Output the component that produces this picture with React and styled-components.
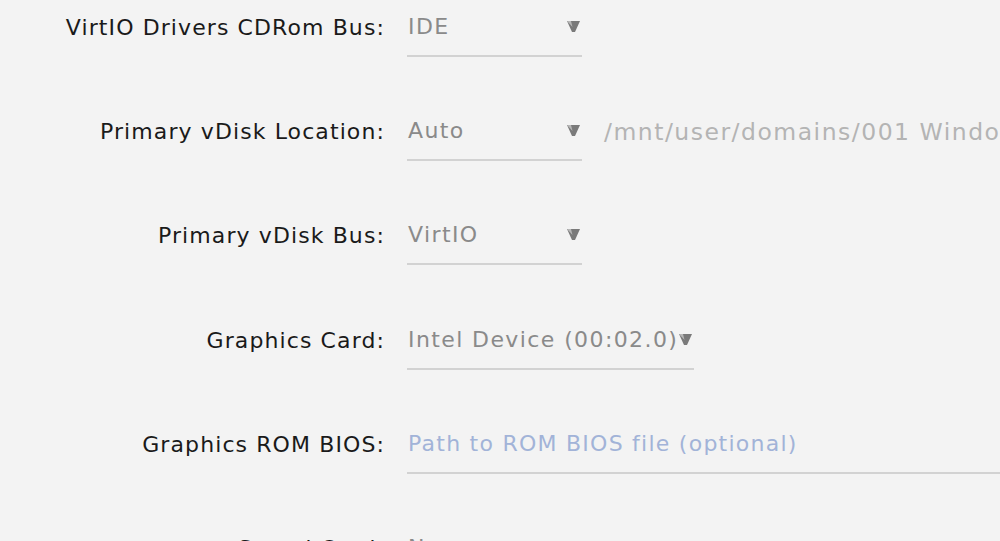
import React from "react";
import styled, { createGlobalStyle } from "styled-components";

const GlobalStyle = createGlobalStyle`
  html, body {
    margin: 0;
    padding: 0;
    background: #f3f3f3;
    overflow: hidden;
  }
  body {
    font-family: "DejaVu Sans", "Liberation Sans", sans-serif;
  }
`;

const Page = styled.div`
  width: 1000px;
  height: 541px;
  overflow: hidden;
  background: #f3f3f3;
`;

const Row = styled.div`
  display: flex;
  align-items: flex-start;
  gap: 22px;
  height: 104.2px;
  padding-top: 13px;
  box-sizing: border-box;
  white-space: nowrap;
`;

const Label = styled.div`
  width: 385px;
  flex: none;
  text-align: right;
  font-size: 22px;
  line-height: 30px;
  letter-spacing: 1.1px;
  color: #1a1a1a;
`;

const Field = styled.div`
  display: flex;
  align-items: center;
  justify-content: space-between;
  width: ${(p) => (p.wide ? "auto" : p.w || "175px")};
  flex: ${(p) => (p.wide ? "1 0 auto" : "none")};
  height: 44px;
  box-sizing: border-box;
  padding-bottom: 14px;
  border-bottom: 2px solid #d2d2d2;
  font-size: 22px;
  line-height: 30px;
  letter-spacing: ${(p) => (p.placeholder ? "1.25px" : "1.4px")};
  color: ${(p) => (p.placeholder ? "#a2b3d8" : "#8a8a8a")};
  margin-right: ${(p) => (p.wide ? "-200px" : "0")};
`;

const Value = styled.span`
  padding-left: 1px;
`;

const Hint = styled.div`
  font-size: 23.5px;
  line-height: 30px;
  letter-spacing: 1.5px;
  color: #b4b4b4;
`;

const Arrow = () => (
  <svg width="13" height="12" viewBox="0 0 13 12" style={{ flex: "none", marginRight: 2 }}>
    <polygon points="0,0 13,0 8,11 5,11" fill="#7a7a7a" />
    <polygon points="0,0 4,0 5.5,6" fill="#b8b8b8" />
  </svg>
);

const rows = [
  { label: "VirtIO Drivers CDRom Bus:", value: "IDE" },
  {
    label: "Primary vDisk Location:",
    value: "Auto",
    hint: "/mnt/user/domains/001 Windows 10/vdisk1.img",
  },
  { label: "Primary vDisk Bus:", value: "VirtIO" },
  { label: "Graphics Card:", value: "Intel Device (00:02.0)", w: "287px" },
  { label: "Graphics ROM BIOS:", value: "Path to ROM BIOS file (optional)", input: true },
  { label: "Sound Card:", value: "None" },
];

export default function App() {
  return (
    <Page>
      <GlobalStyle />
      {rows.map((r) => (
        <Row key={r.label}>
          <Label>{r.label}</Label>
          {r.input ? (
            <Field wide placeholder>
              <Value>{r.value}</Value>
            </Field>
          ) : (
            <Field w={r.w}>
              <Value>{r.value}</Value>
              <Arrow />
            </Field>
          )}
          {r.hint && <Hint>{r.hint}</Hint>}
        </Row>
      ))}
    </Page>
  );
}
